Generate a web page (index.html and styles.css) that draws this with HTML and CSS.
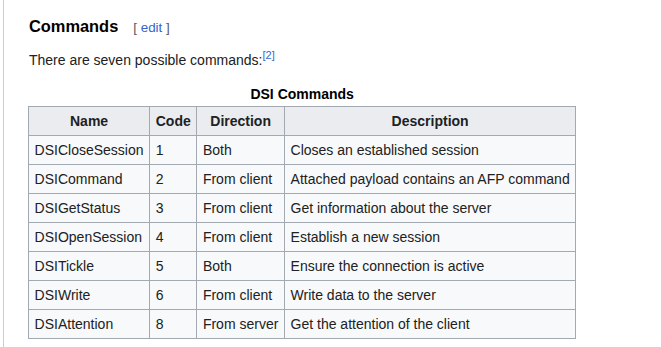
FILE: index.html
```html
<!DOCTYPE html>
<html lang="en">
<head>
    <meta charset="UTF-8">
    <meta name="viewport" content="width=device-width, initial-scale=1.0">
    <title>Commands</title>
    <link rel="stylesheet" href="styles.css">
</head>
<body>

<div class="page">
    <div class="content">
        <h3 class="section-title">
            <span class="headline">Commands</span>
            <span class="editsection">[ <a href="#">edit</a> ]</span>
        </h3>
        <p class="intro">There are seven possible commands:<sup class="ref"><a href="#">[2]</a></sup></p>

        <table class="wikitable">
            <caption>DSI Commands</caption>
            <thead>
                <tr>
                    <th>Name</th>
                    <th>Code</th>
                    <th>Direction</th>
                    <th>Description</th>
                </tr>
            </thead>
            <tbody>
                <tr><td>DSICloseSession</td><td>1</td><td>Both</td><td>Closes an established session</td></tr>
                <tr><td>DSICommand</td><td>2</td><td>From client</td><td>Attached payload contains an AFP command</td></tr>
                <tr><td>DSIGetStatus</td><td>3</td><td>From client</td><td>Get information about the server</td></tr>
                <tr><td>DSIOpenSession</td><td>4</td><td>From client</td><td>Establish a new session</td></tr>
                <tr><td>DSITickle</td><td>5</td><td>Both</td><td>Ensure the connection is active</td></tr>
                <tr><td>DSIWrite</td><td>6</td><td>From client</td><td>Write data to the server</td></tr>
                <tr><td>DSIAttention</td><td>8</td><td>From server</td><td>Get the attention of the client</td></tr>
            </tbody>
        </table>
    </div>
</div>

</body>
</html>
```

FILE: styles.css
```css
* {
    box-sizing: border-box;
    margin: 0;
    padding: 0;
}

body {
    background-color: #fff;
    color: #202122;
    font-family: 'Liberation Sans', Arial, sans-serif;
    font-size: 14px;
}

a {
    color: #3366cc;
    text-decoration: none;
}

.page {
    padding-left: 3px;
}

.content {
    min-height: 347px;
    border-left: 1px solid #a7d7f9;
    padding: 14px 0 0 24px;
}

.section-title {
    display: flex;
    align-items: baseline;
    gap: 15px;
    line-height: 24px;
    padding-left: 1px;
}

.headline {
    font-size: 16.4px;
    font-weight: bold;
    color: #000;
}

.editsection {
    font-size: 13.4px;
    font-weight: normal;
    color: #54595d;
}

.intro {
    margin-top: 9px;
    line-height: 22px;
    padding-left: 1px;
}

.ref {
    font-size: 11px;
    line-height: 1;
    vertical-align: 6px;
}

.wikitable {
    margin-top: 12px;
    border-collapse: collapse;
    background-color: #f8f9fa;
    border: 1px solid #a2a9b1;
    line-height: 22.4px;
}

.wikitable caption {
    font-weight: bold;
    color: #000;
    line-height: 22px;
    padding-bottom: 1px;
}

.wikitable th,
.wikitable td {
    border: 1px solid #a2a9b1;
    padding: 2.8px 5.6px;
}

.wikitable th {
    background-color: #eaecf0;
    font-weight: bold;
    text-align: center;
}

.wikitable td {
    text-align: left;
}
```
